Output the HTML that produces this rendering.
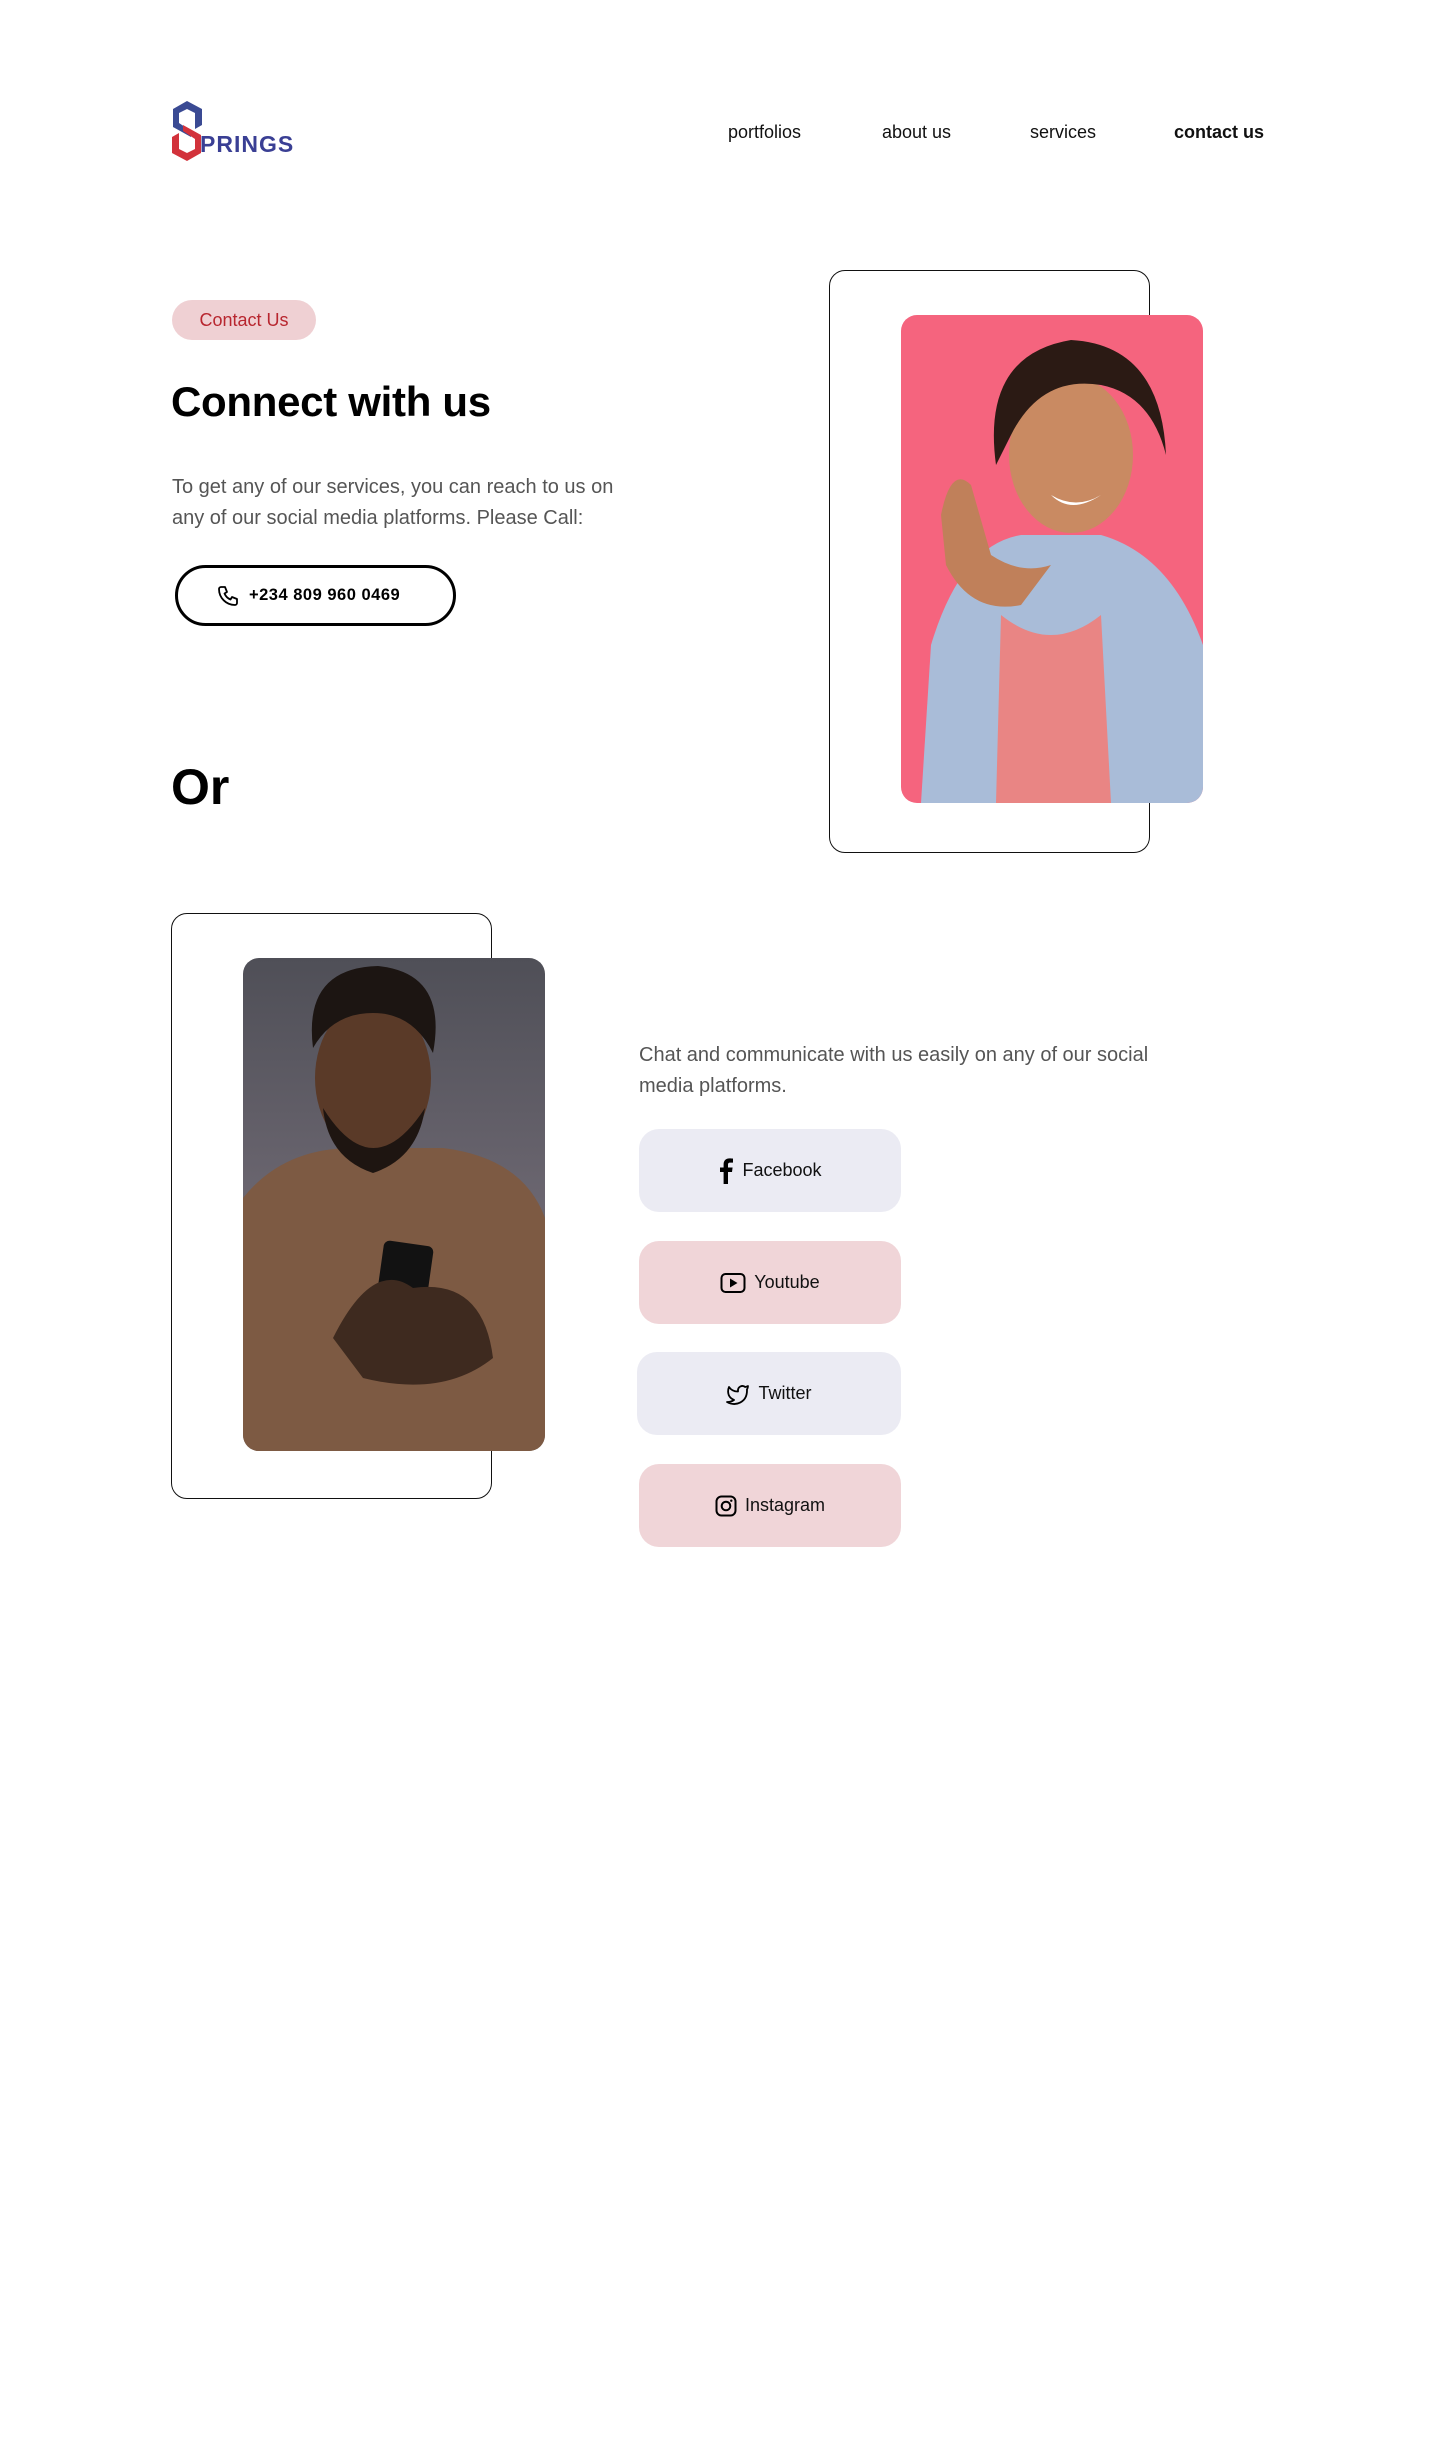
<!DOCTYPE html>
<html><head><meta charset="utf-8">
<style>
*{margin:0;padding:0;box-sizing:border-box}
html,body{width:1440px;height:2442px;background:#fff;overflow:hidden}
body{position:relative;font-family:"Liberation Sans",sans-serif;color:#000}
.a{position:absolute}
.nav{top:122px;font-size:18px;color:#111}
.frame{border:1.5px solid #111;border-radius:16px;background:#fff}
.btn{position:absolute;left:639px;width:262px;height:83px;border-radius:20px;display:flex;align-items:center;justify-content:center;font-size:18px;color:#111;gap:8px}
</style></head><body>

<!-- logo -->
<svg class="a" style="left:169px;top:99px" width="36" height="64" viewBox="0 0 36 64">
  <polygon points="18,2 33,10 33,26 26,30 26,14 18,10 10,14 10,24 22,32 22,38 4,28 4,10" fill="#3a4a93"/>
  <polygon points="18,62 3,54 3,38 10,34 10,50 18,54 26,50 26,40 14,32 14,26 32,36 32,54" fill="#d2323b"/>
</svg>
<div class="a" style="left:200px;top:131px;font-size:23px;font-weight:bold;color:#3a3f94;letter-spacing:1px">PRINGS</div>

<div class="a nav" style="left:728px">portfolios</div>
<div class="a nav" style="left:882px">about us</div>
<div class="a nav" style="left:1030px">services</div>
<div class="a nav" style="left:1174px;font-weight:bold">contact us</div>

<div class="a" style="left:172px;top:300px;width:144px;height:40px;border-radius:20px;background:#efd0d3;color:#b8262f;font-size:18px;display:flex;align-items:center;justify-content:center">Contact Us</div>

<div class="a" style="left:171px;top:378px;font-size:42px;font-weight:bold;letter-spacing:-0.3px">Connect with us</div>

<div class="a" style="left:172px;top:472px;width:450px;font-size:20px;line-height:31px;color:#555">To get any of our services, you can reach to us on any of our social media platforms. Please Call:</div>

<div class="a" style="left:175px;top:565px;width:281px;height:61px;border:3px solid #000;border-radius:31px;display:flex;align-items:center;padding-left:38px;font-size:16.5px;font-weight:bold;letter-spacing:0.5px">
<svg width="24" height="24" viewBox="0 0 24 24" style="margin-right:9px"><path d="M5 3h4l2 5-2.5 1.5a11 11 0 0 0 6 6L16 13l5 2v4a2 2 0 0 1-2 2A16 16 0 0 1 3 5a2 2 0 0 1 2-2z" fill="none" stroke="#000" stroke-width="1.8" stroke-linejoin="round"/></svg>+234 809 960 0469</div>

<div class="a" style="left:171px;top:758px;font-size:50px;font-weight:bold">Or</div>

<!-- woman -->
<div class="a frame" style="left:829px;top:270px;width:321px;height:583px"></div>
<div class="a" style="left:901px;top:315px;width:302px;height:488px;border-radius:16px;overflow:hidden;background:#f5647e">
<svg width="302" height="488" viewBox="0 0 302 488">
  <path d="M20 488 L30 330 Q60 230 120 220 L200 220 Q270 240 302 330 L302 488Z" fill="#a9bcd8"/>
  <path d="M95 488 L100 300 Q150 340 200 300 L210 488Z" fill="#e98584"/>
  <ellipse cx="170" cy="140" rx="62" ry="78" fill="#c98a62"/>
  <path d="M95 150 Q80 40 170 25 Q260 30 265 140 Q250 80 200 70 Q140 60 110 120Z" fill="#2b1a14"/>
  <path d="M40 200 Q50 150 70 170 L90 240 Q120 260 150 250 L120 290 Q70 300 45 250Z" fill="#c0805a"/>
  <path d="M150 180 Q170 200 200 180 Q175 195 150 180Z" fill="#fff"/>
</svg></div>

<!-- man -->
<div class="a frame" style="left:171px;top:913px;width:321px;height:586px"></div>
<div class="a" style="left:243px;top:958px;width:302px;height:493px;border-radius:16px;overflow:hidden;background:linear-gradient(#4f4f57,#6b6670 50%,#6a5a50)">
<svg width="302" height="493" viewBox="0 0 302 493">
  <path d="M0 493 L0 240 Q40 190 110 190 L200 190 Q280 200 302 260 L302 493Z" fill="#7d5a43"/>
  <ellipse cx="130" cy="120" rx="58" ry="78" fill="#5a3a28"/>
  <path d="M70 90 Q60 10 135 8 Q205 15 190 95 Q170 55 130 55 Q90 55 70 90Z" fill="#1c1512"/>
  <path d="M80 150 Q130 230 182 150 Q175 200 130 215 Q85 200 80 150Z" fill="#1e1511"/>
  <rect x="135" y="285" width="50" height="90" rx="6" fill="#121212" transform="rotate(8 160 330)"/>
  <path d="M90 380 Q130 300 170 330 Q240 320 250 400 Q200 440 120 420Z" fill="#3e2a1f"/>
</svg></div>

<div class="a" style="left:639px;top:1040px;width:560px;font-size:20px;line-height:31px;color:#555">Chat and communicate with us easily on any of our social media platforms.</div>

<div class="btn" style="top:1129px;background:#ebebf3"><svg width="16" height="26" viewBox="0 0 16 26"><path d="M10 26V14h4l.6-4.5H10V6.8c0-1.3.4-2.2 2.2-2.2H15V.6C14.5.5 13 .4 11.4.4 8 .4 5.6 2.5 5.6 6.3v3.2H2V14h3.6v12z" fill="#000"/></svg>Facebook</div>
<div class="btn" style="top:1241px;background:#f0d5d8"><svg width="26" height="22" viewBox="0 0 26 22"><rect x="1.5" y="2" width="23" height="18" rx="4" fill="none" stroke="#000" stroke-width="2"/><path d="M10 6.5v9l7.5-4.5z" fill="#000"/></svg>Youtube</div>
<div class="btn" style="top:1352px;background:#ebebf3;left:637px;width:264px"><svg width="24" height="22" viewBox="0 0 24 22"><path d="M22 3a9 9 0 0 1-2.8 1A4.4 4.4 0 0 0 12 7.5v1A10.5 10.5 0 0 1 3 4s-4 9 5 13a11.6 11.6 0 0 1-7 2c9 5 20 0 20-11.5a4.5 4.5 0 0 0-.1-.8A7.7 7.7 0 0 0 22 3z" fill="none" stroke="#000" stroke-width="1.8" stroke-linejoin="round"/></svg>Twitter</div>
<div class="btn" style="top:1464px;background:#f0d5d8"><svg width="22" height="22" viewBox="0 0 22 22"><rect x="1.5" y="1.5" width="19" height="19" rx="5" fill="none" stroke="#000" stroke-width="2"/><circle cx="11" cy="11" r="4.3" fill="none" stroke="#000" stroke-width="2"/><circle cx="16.3" cy="5.7" r="1.2" fill="#000"/></svg>Instagram</div>

</body></html>
